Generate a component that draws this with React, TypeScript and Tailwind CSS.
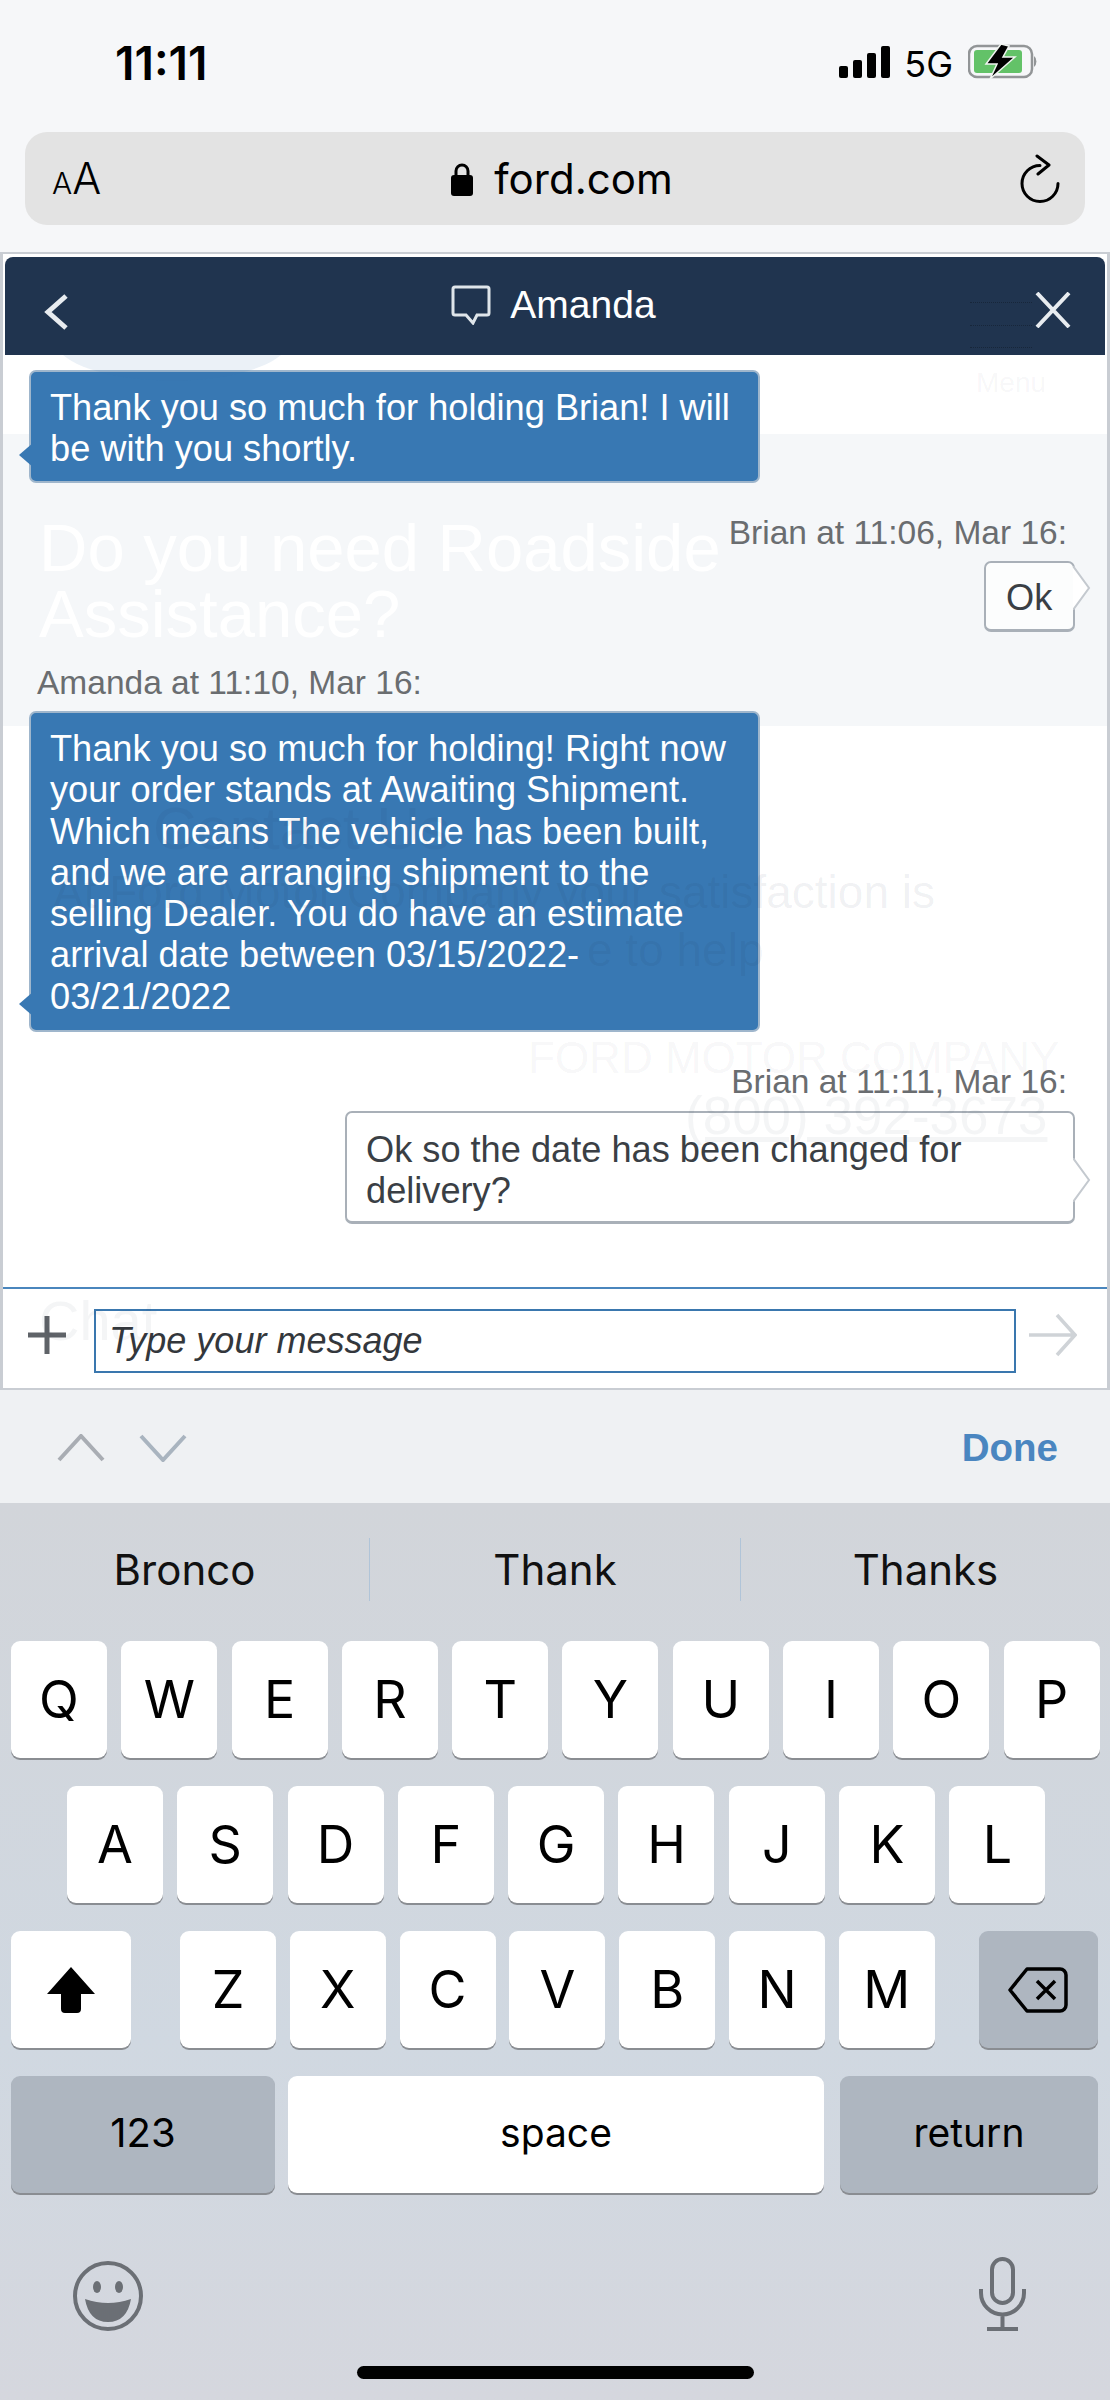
import React from 'react'

const sans = "font-['Liberation_Sans',Arial,sans-serif]"
const ui = "font-['Inter','Liberation_Sans',sans-serif]"

function AgentBubble({ children, h }: { children: React.ReactNode; h: string }) {
    return (
        <div className={`relative ml-[26px] w-[731px] ${h} rounded-[7px] bg-[#3878b3] border-2 border-[#9fb6cc] px-[19px] pt-[15px] text-[36.2px] leading-[41.3px] text-white`}>
            {children}
            <svg width="16" height="44" viewBox="0 0 16 44" className="absolute -left-[13px] bottom-[4px]">
                <path d="M16 9 L1 22 L16 35z" fill="#3878b3" strokeLinejoin="round" />
            </svg>
        </div>
    )
}

function UserBubble({ children, className }: { children: React.ReactNode; className: string }) {
    return (
        <div className={`relative ml-auto mr-[32px] rounded-[7px] bg-white/70 border-2 border-b-[3px] border-[#a9b0b8] text-[36.2px] leading-[41.3px] text-[#3a3f45] ${className}`}>
            {children}
            <svg width="18" height="44" viewBox="0 0 18 44" className="absolute -right-[18px] bottom-[19px]">
                <path d="M0 0 L16 22 L0 44" fill="#ffffff" stroke="#c4c9cf" strokeWidth="2" />
            </svg>
        </div>
    )
}

function Key({ label, w = 'w-[96px]', dark }: { label: React.ReactNode; w?: string; dark?: boolean }) {
    return (
        <div
            className={`${w} h-full flex items-center justify-center rounded-[9px] text-[52px] text-black shadow-[0_2px_0_#8a8d92] ${
                dark ? 'bg-[#aeb6c0]' : 'bg-white'
            }`}
        >
            {label}
        </div>
    )
}

function Row({ keys }: { keys: string }) {
    return (
        <>
            {keys.split('').map((k) => (
                <Key key={k} label={k} />
            ))}
        </>
    )
}

function App() {
    return (
        <div className={`w-[1110px] h-[2400px] overflow-hidden bg-[#f6f7f9] ${sans}`}>
            {/* status bar */}
            <div className={`h-[132px] flex pt-[37px] pl-[115px] pr-[72px] ${ui}`}>
                <span className="text-[46px] leading-[52px] font-semibold text-black">11:11</span>
                <div className="ml-auto flex items-start pt-[9px]">
                    <svg width="52" height="32" viewBox="0 0 52 32" fill="#000">
                        <rect x="0" y="20" width="9" height="12" rx="2" />
                        <rect x="14" y="14" width="9" height="18" rx="2" />
                        <rect x="28" y="7" width="9" height="25" rx="2" />
                        <rect x="42" y="0" width="9" height="32" rx="2" />
                    </svg>
                    <span className="ml-[13px] text-[36px] leading-[36px] text-black">5G</span>
                    <svg width="70" height="36" viewBox="0 0 70 36" className="ml-[15px] -mt-[2px]">
                        <rect x="1" y="2" width="63" height="31" rx="8" fill="none" stroke="#929597" strokeWidth="2.5" />
                        <rect x="6" y="6" width="48" height="23" rx="3" fill="#63c268" />
                        <path d="M66 12 a4 6 0 0 1 0 11z" fill="#929597" />
                        <path d="M33 0 L18 20 L29 20 L22 35 L47 13 L35 13 L41 2z" fill="#000" stroke="#f0f4f0" strokeWidth="1.5" />
                    </svg>
                </div>
            </div>

            {/* url bar */}
            <div className="mx-[25px] h-[93px] rounded-[22px] bg-[#e3e3e3] flex items-center pl-[27px] pr-[24px] text-black">
                <span className={`${ui} w-[52px] whitespace-nowrap font-light`}>
                    <span className="text-[30px]">A</span>
                    <span className="text-[43px]">A</span>
                </span>
                <div className={`flex-1 flex items-center justify-center gap-[20px] text-[42px] ${ui}`}>
                    <svg width="24" height="34" viewBox="0 0 24 34">
                        <rect x="1" y="13" width="22" height="21" rx="3" fill="#000" />
                        <path d="M6 14 V9 a6 6 0 0 1 12 0 V14" fill="none" stroke="#000" strokeWidth="3" />
                    </svg>
                    <span>ford.com</span>
                </div>
                <svg width="42" height="50" viewBox="0 0 42 50" fill="none" stroke="#000" strokeWidth="3" strokeLinecap="round" strokeLinejoin="round">
                    <path d="M39 29.5 A18 18 0 1 1 21 11.5" />
                    <path d="M18 2 L30 11 L19 20" />
                </svg>
            </div>

            {/* chat panel */}
            <div className="relative mt-[27px] h-[1138px] border-t-2 border-x-[3px] border-b-2 border-[#c9cdd3] bg-white overflow-hidden">
                {/* page behind the chat, shows through faintly */}
                <div className="absolute left-0 right-0 top-[180px] h-[292px] bg-[#f5f7f9]" />
                <div className="absolute left-[36px] top-[261px] text-[67px] leading-[66px] text-white">
                    Do you need Roadside
                    <br />
                    Assistance?
                </div>

                <div className="relative h-full flex flex-col">
                    {/* header */}
                    <div className="mx-[2px] mt-[3px] h-[98px] shrink-0 rounded-t-[8px] bg-[#20344f] flex items-center relative text-white">
                        <svg width="26" height="36" viewBox="0 0 26 36" fill="none" stroke="#e8ecf0" strokeWidth="5" className="absolute left-[38px] top-[37px]">
                            <path d="M23 2 L5 18 L23 34" />
                        </svg>
                        <div className="mx-auto flex items-center gap-[19px] -mt-[2px] pr-[3px]">
                            <svg width="40" height="40" viewBox="0 0 40 40" fill="none" stroke="#dfe5ea" strokeWidth="3">
                                <path d="M4 2 H36 a2 2 0 0 1 2 2 V28 a2 2 0 0 1 -2 2 H26 L22 38 L15 30 H4 a2 2 0 0 1 -2 -2 V4 a2 2 0 0 1 2 -2z" />
                            </svg>
                            <span className="text-[39px] leading-[44px]">Amanda</span>
                        </div>
                        {/* hamburger of the page behind, as dotted traces */}
                        <div className="absolute left-[965px] top-[45px] w-[62px] border-t border-dotted border-[#17263a]" />
                        <div className="absolute left-[965px] top-[68px] w-[62px] border-t border-dotted border-[#17263a]" />
                        <div className="absolute left-[965px] top-[90px] w-[62px] border-t border-dotted border-[#17263a]" />
                        <svg width="36" height="36" viewBox="0 0 36 36" fill="none" stroke="#e8ecf0" strokeWidth="4" className="absolute right-[34px] top-[35px]">
                            <path d="M2 1 L34 35 M34 1 L2 35" />
                        </svg>
                    </div>

                    {/* messages */}
                    <div className="flex-1 min-h-0 pt-[15px]">
                        <AgentBubble h="h-[113px]">Thank you so much for holding Brian! I will be with you shortly.</AgentBubble>
                        <div className="mt-[30px] pr-[40px] text-right text-[33.5px] leading-[40px] text-[#6a6d70]">Brian at 11:06, Mar 16:</div>
                        <UserBubble className="mt-[8px] w-[91px] h-[71px] pl-[20px] pt-[14px]">Ok</UserBubble>
                        <div className="mt-[31px] pl-[34px] text-[33.5px] leading-[40px] text-[#6a6d70]">Amanda at 11:10, Mar 16:</div>
                        <div className="mt-[8px]">
                            <AgentBubble h="h-[321px]">
                                Thank you so much for holding! Right now your order stands at Awaiting Shipment. Which means The vehicle has been built, and we are arranging shipment to the selling Dealer. You do have an estimate arrival date between 03/15/2022-
                                <br />
                                03/21/2022
                            </AgentBubble>
                        </div>
                        <div className="mt-[30px] pr-[40px] text-right text-[33.5px] leading-[40px] text-[#6a6d70]">Brian at 11:11, Mar 16:</div>
                        <UserBubble className="mt-[9px] w-[730px] h-[113px] pl-[19px] pt-[16px]">Ok so the date has been changed for delivery?</UserBubble>
                    </div>

                    {/* composer */}
                    <div className="h-[101px] shrink-0 border-t-2 border-[#4a86bd] flex items-start relative">
                        <svg width="38" height="38" viewBox="0 0 38 38" stroke="#5f6368" strokeWidth="5" className="ml-[25px] mt-[27px]">
                            <path d="M19 0 V38 M0 19 H38" />
                        </svg>
                        <div className="ml-[28px] mt-[20px] w-[922px] h-[64px] border-2 border-[#3a77ae] pl-[13px] flex items-center text-[36px] italic text-[#33373c]">
                            Type your message
                        </div>
                        <svg width="48" height="44" viewBox="0 0 48 44" fill="none" stroke="#cfd3d7" strokeWidth="3.5" className="ml-[13px] mt-[24px]">
                            <path d="M0 22 H46 M28 2 L46 22 L28 42" />
                        </svg>
                    </div>
                </div>

                {/* ghost of the page, lies faintly over the chat */}
                <div className="absolute inset-0 pointer-events-none">
                    <div className="absolute left-[973px] top-[108px] text-[28px] text-[#20344f]/[0.05]">Menu</div>
                    <svg width="218" height="30" viewBox="0 0 218 30" className="absolute left-[60px] top-[101px]">
                        <path d="M0 0 C40 34 178 34 218 0z" fill="#3878b3" opacity="0.1" />
                    </svg>
                    <div className="absolute left-[150px] top-[530px] text-[60px] text-[#20344f]/[0.06]">Contact Us</div>
                    <div className="absolute left-[50px] top-[604px] text-[46px] whitespace-nowrap text-[#20344f]/[0.07]">At Ford Motor Company your satisfaction is</div>
                    <div className="absolute left-[584px] top-[662px] text-[46px] whitespace-nowrap text-[#20344f]/[0.07]">e to help</div>
                    <div className="absolute left-[525px] top-[771px] text-[44px] whitespace-nowrap text-[#20344f]/[0.05]">FORD MOTOR COMPANY</div>
                    <div className="absolute left-[682px] top-[822px] text-[53px] whitespace-nowrap underline text-[#20344f]/[0.05]">(800) 392-3673</div>
                    <div className="absolute left-[36px] top-[1025px] text-[56px] text-[#20344f]/[0.05]">Chat</div>
                </div>
            </div>

            {/* keyboard accessory bar */}
            <div className="h-[113px] bg-[#eff1f3] flex items-center pl-[57px] pr-[52px] pt-[3px]">
                <svg width="48" height="28" viewBox="0 0 48 28" fill="none" stroke="#a9adb3" strokeWidth="4">
                    <path d="M2 26 L24 2 L46 26" />
                </svg>
                <svg width="48" height="28" viewBox="0 0 48 28" fill="none" stroke="#a9b4bf" strokeWidth="4" className="ml-[34px]">
                    <path d="M2 2 L24 26 L46 2" />
                </svg>
                <span className="ml-auto text-[38.5px] font-bold text-[#4a86c0]">Done</span>
            </div>

            {/* keyboard */}
            <div className={`h-[897px] bg-gradient-to-b from-[#d2d5da] via-[#d0d8e1] via-60% to-[#d5d7de] ${ui} flex flex-col`}>
                <div className="h-[138px] flex items-center pb-[6px] text-[42px] text-[#111]">
                    <div className="w-[369px] text-center">Bronco</div>
                    <div className="w-[1px] h-[63px] bg-[#b0c4d8]" />
                    <div className="w-[370px] text-center">Thank</div>
                    <div className="w-[1px] h-[63px] bg-[#b0c4d8]" />
                    <div className="flex-1 text-center">Thanks</div>
                </div>
                <div className="h-[117px] flex gap-[14.3px] pl-[11px]">
                    <Row keys="QWERTYUIOP" />
                </div>
                <div className="mt-[28px] h-[117px] flex gap-[14.3px] pl-[67px]">
                    <Row keys="ASDFGHJKL" />
                </div>
                <div className="mt-[28px] h-[117px] flex pl-[11px]">
                    <Key
                        w="w-[120px]"
                        label={
                            <svg width="50" height="46" viewBox="0 0 50 46" fill="#000">
                                <path d="M25 0 L49 27 H35 V42 a4 4 0 0 1 -4 4 H19 a4 4 0 0 1 -4 -4 V27 H1z" />
                            </svg>
                        }
                    />
                    <div className="ml-[49px] flex gap-[13.8px]">
                        <Row keys="ZXCVBNM" />
                    </div>
                    <div className="ml-[44px]">
                        <Key
                            dark
                            w="w-[119px]"
                            label={
                                <svg width="60" height="46" viewBox="0 0 60 46" fill="none" stroke="#000" strokeWidth="3.5" strokeLinejoin="round">
                                    <path d="M19 2 H52 a6 6 0 0 1 6 6 V38 a6 6 0 0 1 -6 6 H19 L2 23z" />
                                    <path d="M29 14 L47 32 M47 14 L29 32" />
                                </svg>
                            }
                        />
                    </div>
                </div>
                <div className="mt-[28px] h-[117px] flex pl-[11px]">
                    <Key dark w="w-[264px]" label={<span className="text-[40px] -mt-[3px]">123</span>} />
                    <div className="ml-[13px]">
                        <Key w="w-[536px]" label={<span className="text-[39px] -mt-[3px]">space</span>} />
                    </div>
                    <div className="ml-[16px]">
                        <Key dark w="w-[258px]" label={<span className="text-[39px] -mt-[3px]">return</span>} />
                    </div>
                </div>
                <div className="mt-[68px] flex items-start pl-[73px] pr-[84px]">
                    <svg width="70" height="70" viewBox="0 0 70 70">
                        <circle cx="35" cy="35" r="33" fill="none" stroke="#6b6f75" strokeWidth="4" />
                        <ellipse cx="24" cy="26" rx="4" ry="6" fill="#6b6f75" />
                        <ellipse cx="46" cy="26" rx="4" ry="6" fill="#6b6f75" />
                        <path d="M12 38 Q35 46 58 38 Q54 61 35 61 Q16 61 12 38z" fill="#6b6f75" />
                    </svg>
                    <svg width="47" height="74" viewBox="0 0 47 74" fill="none" stroke="#6b6f75" strokeWidth="4" className="ml-auto -mt-[4px]">
                        <rect x="13" y="2" width="21" height="44" rx="10.5" />
                        <path d="M2 32 V36 a21.5 21.5 0 0 0 43 0 V32 M23.5 58 V72 M8 72 H39" />
                    </svg>
                </div>
                <div className="mx-auto mt-[35px] w-[397px] h-[13px] rounded-full bg-black" />
            </div>
        </div>
    )
}

export default App
